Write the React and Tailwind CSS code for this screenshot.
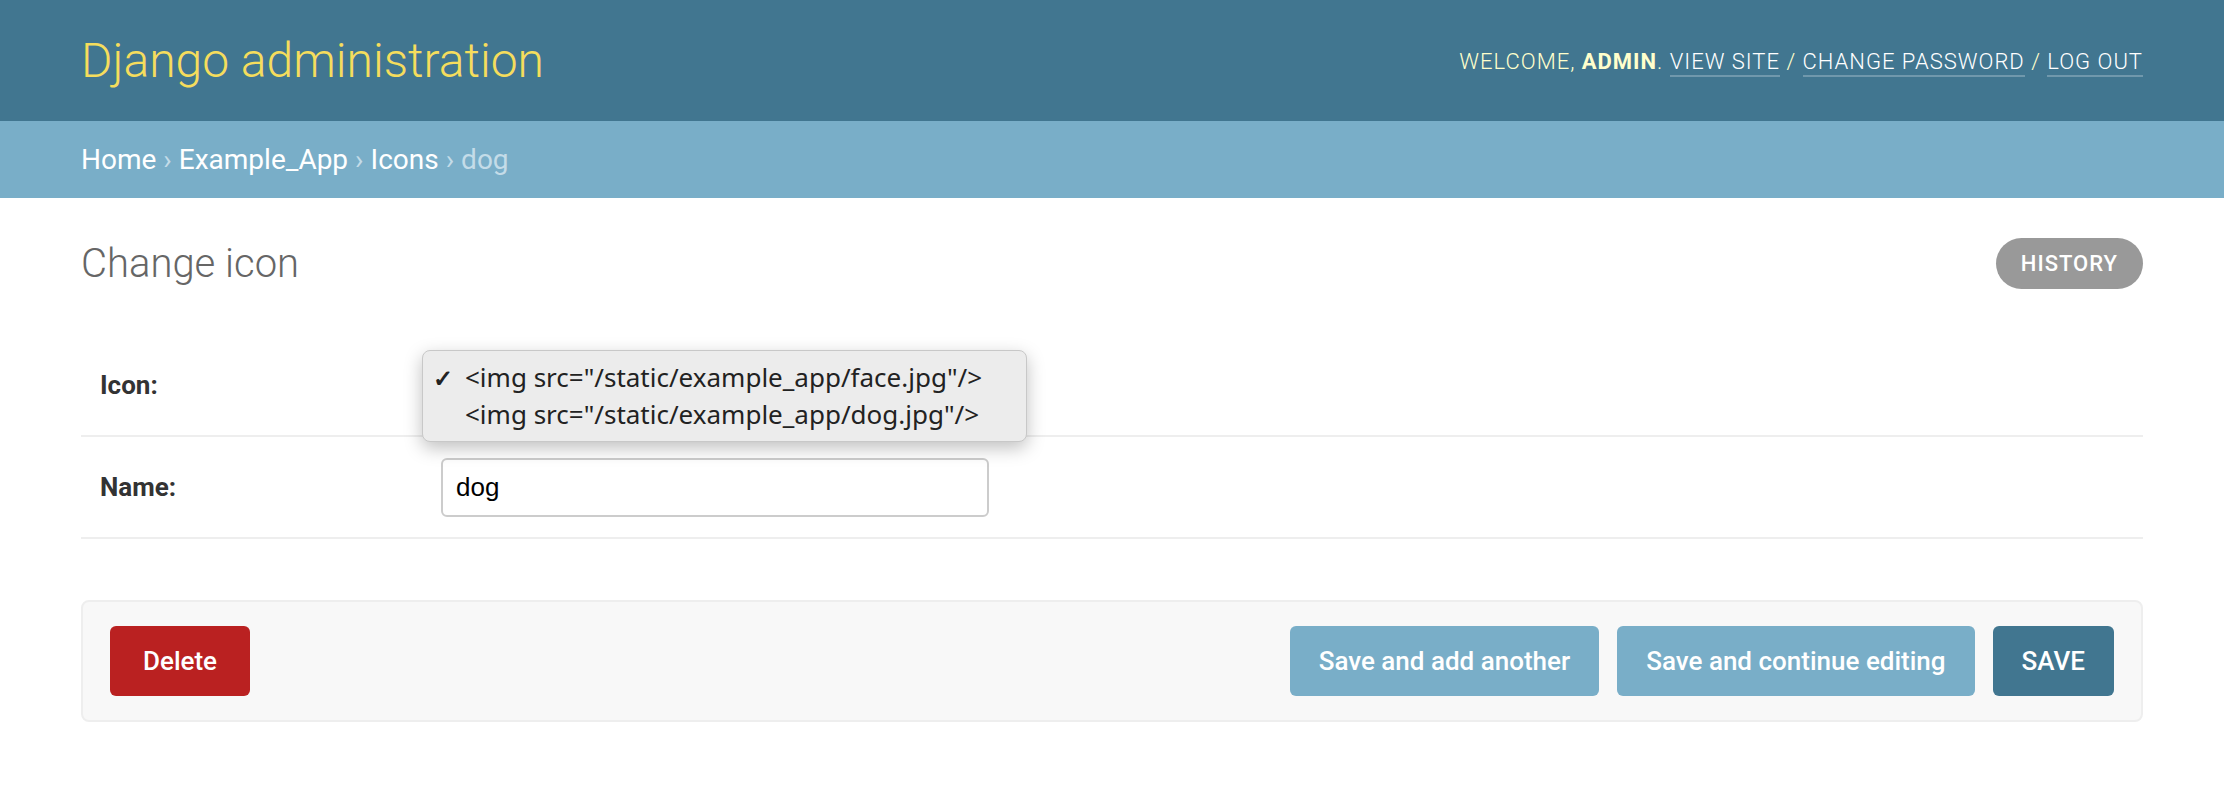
import React from 'react';

function Header() {
  return (
    <div className="h-[121px] bg-[#417690] px-[81px] flex items-center justify-between">
      <h1 className="text-[48px] font-light text-[#f5dd5d] leading-none">Django administration</h1>
      <div className="text-[22px] font-light tracking-[1px] uppercase text-[#ffc] pt-[2px]">
        Welcome, <strong className="font-bold">admin</strong>.{' '}
        <a className="text-white border-b-2 border-white/25 pb-[1px]">View site</a> /{' '}
        <a className="text-white border-b-2 border-white/25 pb-[1px]">Change password</a> /{' '}
        <a className="text-white border-b-2 border-white/25 pb-[1px]">Log out</a>
      </div>
    </div>
  );
}

function Breadcrumbs() {
  return (
    <div className="h-[77px] bg-[#79aec8] px-[81px] flex items-center text-[28px] text-[#c4dce8]">
      <a className="text-white">Home</a>
      <span className="mx-[7px]">›</span>
      <a className="text-white">Example_App</a>
      <span className="mx-[7px]">›</span>
      <a className="text-white">Icons</a>
      <span className="mx-[7px]">›</span>
      <span>dog</span>
    </div>
  );
}

function IconDropdown() {
  const options = [
    { label: '<img src="/static/example_app/face.jpg"/>', checked: true },
    { label: '<img src="/static/example_app/dog.jpg"/>', checked: false },
  ];
  return (
    <div className="absolute left-[-21px] top-[-7px] w-[605px] py-[8px] bg-[#ececec] rounded-[8px] border border-[#c8c8c8] shadow-[0_6px_18px_rgba(0,0,0,0.25)] font-['Noto_Sans',sans-serif] text-[26px] text-[#222]">
      {options.map((o) => (
        <div key={o.label} className="h-[37px] flex items-center">
          <span className="w-[42px] shrink-0 pl-[10px] text-[24px] font-bold">{o.checked ? '✓' : ''}</span>
          <span>{o.label}</span>
        </div>
      ))}
    </div>
  );
}

function FormRow({ label, children }) {
  return (
    <div className="h-[102px] px-[19px] flex items-center border-b-2 border-[#eee]">
      <label className="w-[341px] text-[26px] font-bold text-[#333]">{label}</label>
      {children}
    </div>
  );
}

export default function App() {
  return (
    <div className="min-h-[806px] bg-white font-['Roboto',sans-serif]">
      <Header />
      <Breadcrumbs />

      <div className="px-[81px] pt-[40px]">
        <div className="h-[51px] flex items-center justify-between">
          <h1 className="text-[40px] font-light text-[#666] leading-none">Change icon</h1>
          <a className="h-[51px] px-[25px] rounded-full bg-[#999] text-white text-[22px] font-medium tracking-[1px] uppercase flex items-center">
            History
          </a>
        </div>

        <div className="mt-[46px]">
          <FormRow label="Icon:">
            <div className="relative w-[552px] h-[60px] rounded-[6px] border-2 border-[#ccc] ring-4 ring-[#7aa7e9]">
              <IconDropdown />
            </div>
          </FormRow>
          <FormRow label="Name:">
            <div className="w-[548px] h-[59px] rounded-[6px] border-2 border-[#ccc] flex items-center px-[13px] font-['Liberation_Sans',sans-serif] text-[26px] text-black">
              dog
            </div>
          </FormRow>
        </div>

        <div className="mt-[61px] h-[122px] rounded-[8px] border-2 border-[#eee] bg-[#f8f8f8] px-[27px] flex items-center justify-between">
          <a className="h-[70px] px-[33px] rounded-[6px] bg-[#ba2121] text-white text-[26px] font-medium flex items-center">
            Delete
          </a>
          <div className="flex gap-[18px]">
            <button className="h-[70px] px-[29px] rounded-[6px] bg-[#79aec8] text-white text-[26px] font-medium">
              Save and add another
            </button>
            <button className="h-[70px] px-[29px] rounded-[6px] bg-[#79aec8] text-white text-[26px] font-medium">
              Save and continue editing
            </button>
            <button className="h-[70px] px-[29px] rounded-[6px] bg-[#417690] text-white text-[26px] font-medium uppercase">
              Save
            </button>
          </div>
        </div>
      </div>
    </div>
  );
}
